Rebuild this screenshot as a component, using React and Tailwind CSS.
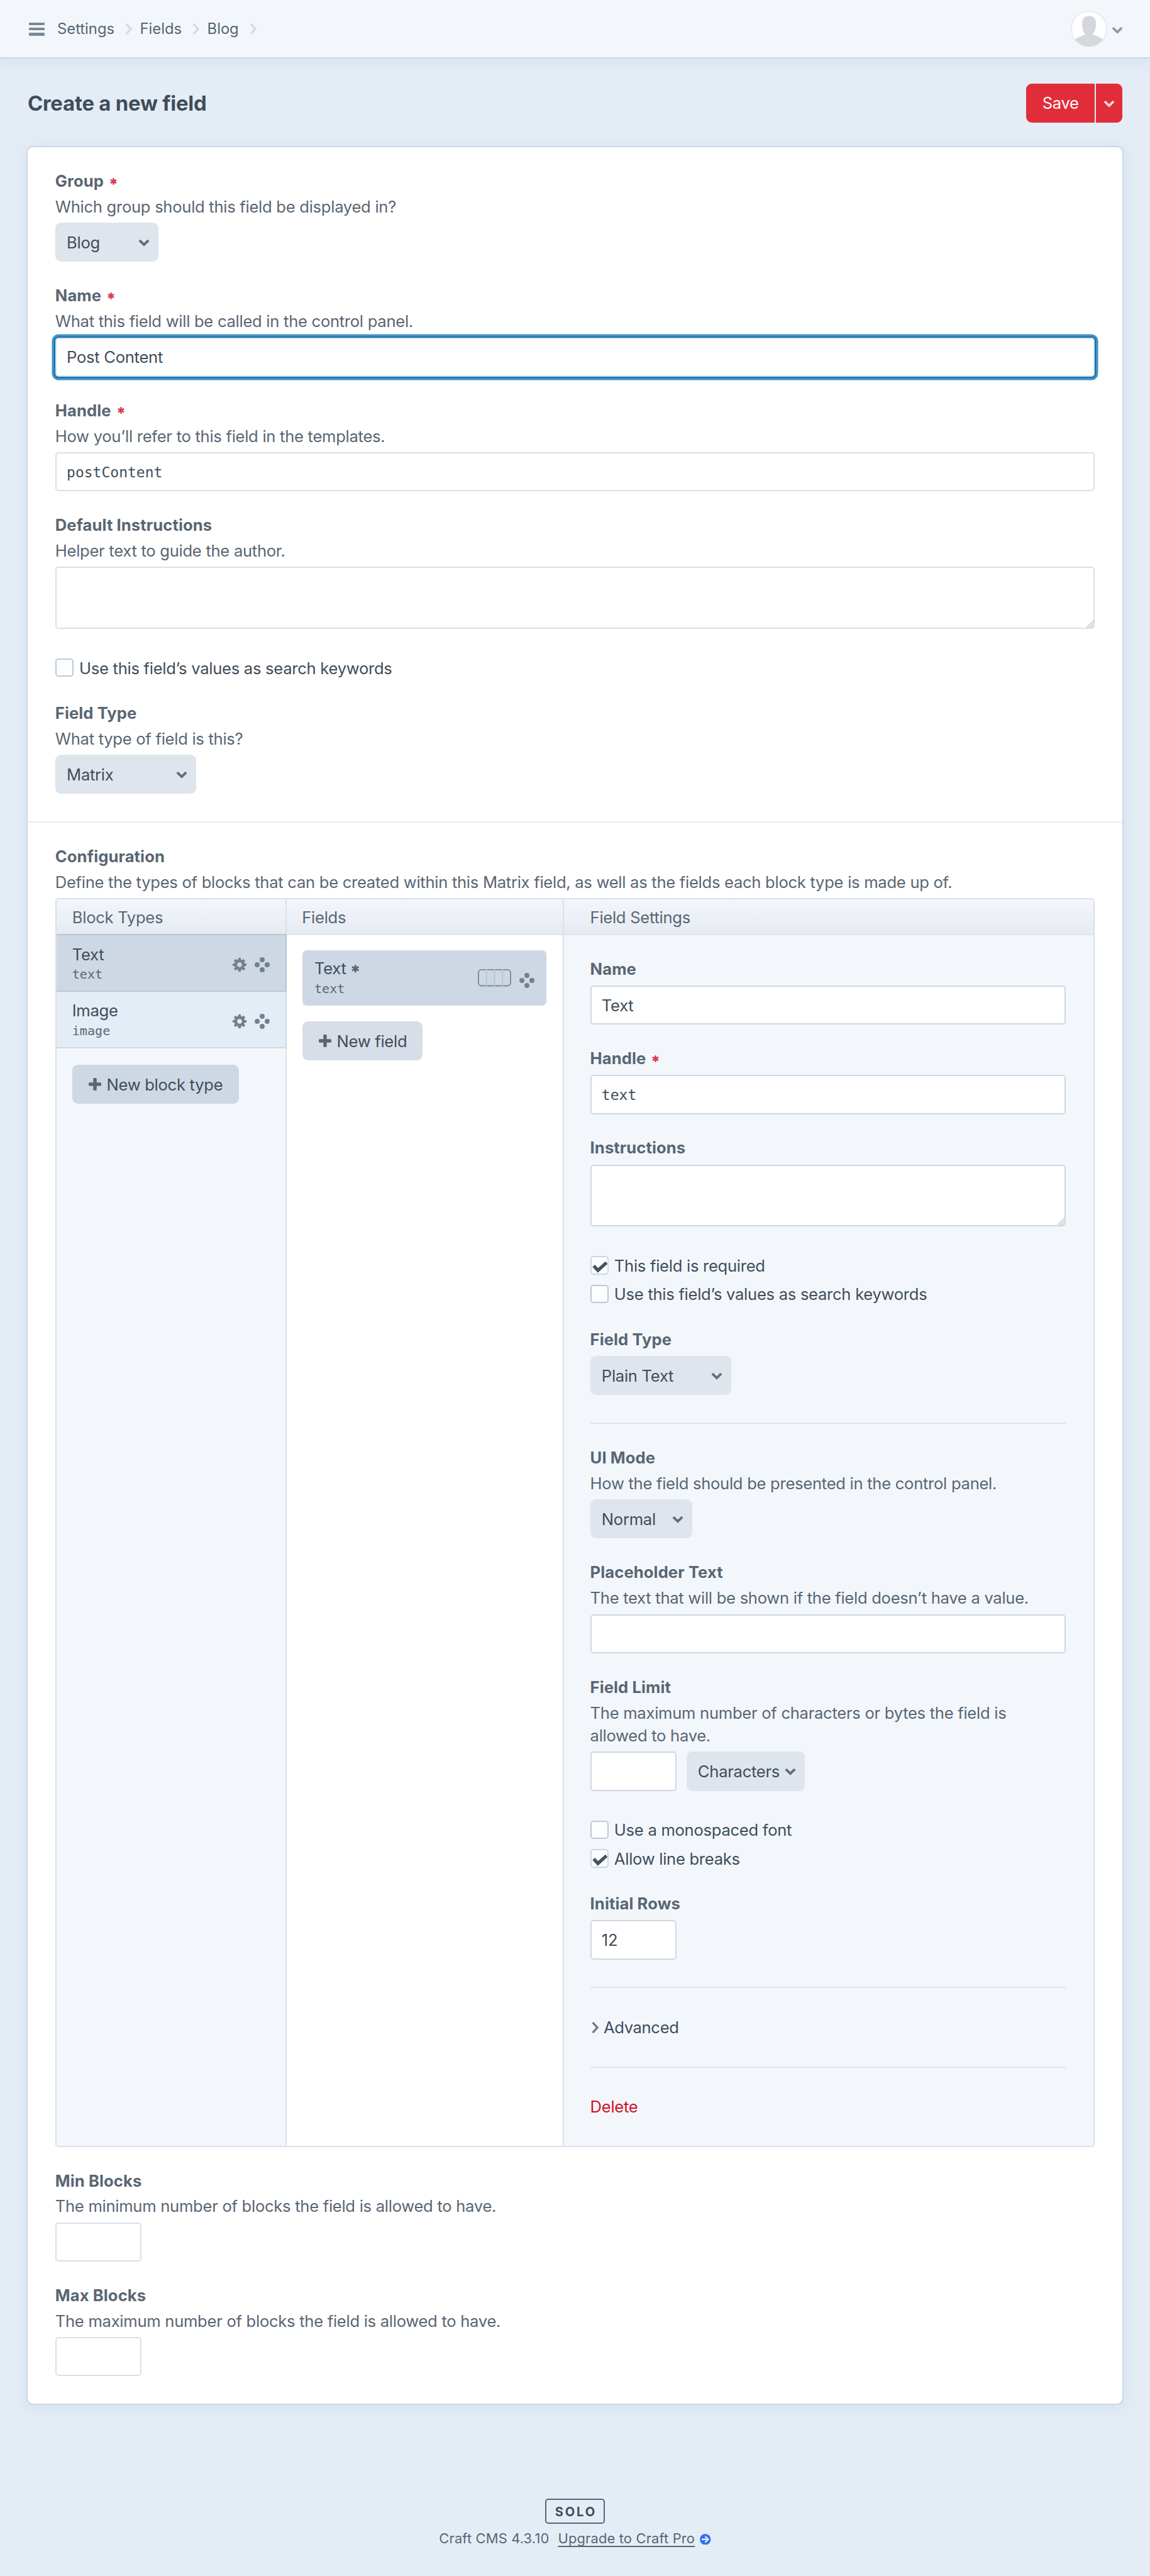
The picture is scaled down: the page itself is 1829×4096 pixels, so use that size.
import React from "react";

function ChevronDown({ className = "" }) {
  return (
    <svg viewBox="0 0 19.5 13" className={`h-[12px] w-[18px] shrink-0 ${className}`} fill="none" stroke="currentColor" strokeWidth="4.2">
      <path d="M2 2.2 9.75 9.9 17.5 2.2" />
    </svg>
  );
}

function ChevronRight({ className = "" }) {
  return (
    <svg viewBox="0 0 12.5 20" className={`h-[18px] w-[11.4px] shrink-0 ${className}`} fill="none" stroke="currentColor" strokeWidth="3.6">
      <path d="M1.8 1 9.9 10 1.8 19" />
    </svg>
  );
}

function Asterisk({ className = "" }) {
  return (
    <svg viewBox="0 0 14 14" className={`shrink-0 ${className}`} fill="none" stroke="currentColor" strokeWidth="3.3">
      <path d="M7 .2v13.6M1.2 3.7l11.6 6.6M1.2 10.3l11.6-6.6" />
    </svg>
  );
}

function Gear() {
  return (
    <svg viewBox="0 0 24 24" className="size-[22px] shrink-0" fill="none" stroke="currentColor">
      <circle cx="12" cy="12" r="6.6" strokeWidth="5.1" />
      <path
        strokeWidth="4.6"
        d="M12 0v5M12 19v5M0 12h5M19 12h5M3.6 3.6l3.5 3.5M16.9 16.9l3.5 3.5M3.6 20.4l3.5-3.5M16.9 7.1l3.5-3.5"
      />
    </svg>
  );
}

function Move() {
  return (
    <svg viewBox="0 0 26 26" className="size-[24px] shrink-0" fill="currentColor">
      <circle cx="13" cy="4.4" r="4.3" />
      <circle cx="13" cy="21.6" r="4.3" />
      <circle cx="4.4" cy="13" r="4.3" />
      <circle cx="21.6" cy="13" r="4.3" />
    </svg>
  );
}

function Plus() {
  return (
    <svg viewBox="0 0 22 22" className="size-[20px] shrink-0" fill="#596673">
      <rect x="8" y="0" width="6" height="22" rx="1.6" />
      <rect x="0" y="8" width="22" height="6" rx="1.6" />
    </svg>
  );
}

function WidthSlider() {
  return (
    <svg viewBox="0 0 58 30" className="h-[27.4px] w-[53px] shrink-0" fill="none" strokeWidth="2">
      <rect x="1" y="1" width="56" height="28" rx="5.5" stroke="#7b8997" />
      <path d="M15 0v30M29 0v30M43 0v30" stroke="#b7c4d1" />
    </svg>
  );
}

function Label({ children, required, tight }) {
  return (
    <div
      className={`-mt-[8px] flex items-center gap-[10px] text-[25.6px] leading-[36.35px] font-bold tracking-[0.004em] text-[#596673] ${
        tight ? "mb-[4.5px]" : "mb-[8px]"
      }`}
    >
      {children}
      {required && <Asterisk className="size-[11px] text-[#da3b4e]" />}
    </div>
  );
}

function Field({ label, required, desc, children }) {
  return (
    <div>
      <Label required={required} tight={!!desc}>
        {label}
      </Label>
      {desc && <p className="mb-[7.2px] text-[#596673]">{desc}</p>}
      {children}
    </div>
  );
}

function Input({ value, mono, focus, className = "", border = "border-[#d9e0e9]" }) {
  return (
    <div
      className={`flex h-[62.17px] items-center rounded-[5px] border-2 bg-white px-[16.3px] pt-[1.5px] text-[#3f4d5a] ${
        focus ? "border-[#d9e0e9] shadow-[0_0_0_2px_#0f73b3,0_0_0_5.5px_#4092c6]" : border
      } ${mono ? "font-['DejaVu_Sans_Mono',monospace] text-[23px] tracking-normal" : ""} ${className}`}
    >
      {value}
    </div>
  );
}

function TextArea({ border = "border-[#d9e0e9]" }) {
  return (
    <div className={`flex h-[98.3px] items-end justify-end rounded-[5px] border-2 bg-white ${border}`}>
      <svg viewBox="0 0 12 12" className="size-[11px]" stroke="#8b8b8b" strokeWidth="1">
        <path d="M0 12 12 0M4 12l8-8M8 12l4-4" />
      </svg>
    </div>
  );
}

function Select({ value, className = "" }) {
  return (
    <div
      className={`flex h-[62.17px] items-center justify-between rounded-[9px] bg-[#dfe5ec] pt-[2px] pr-[14px] pl-[18.3px] text-[#3f4d5a] ${className}`}
    >
      {value}
      <ChevronDown className="text-[#606d7b]" />
    </div>
  );
}

function Checkbox({ checked, children }) {
  return (
    <div className="flex h-[36.35px] items-center text-[#3f4d5a]">
      <span
        className={`mr-[9px] size-[29.3px] shrink-0 rounded-[5px] border-2 bg-[#fbfdff] ${
          checked ? "border-[#cdd8e4]" : "border-[#bcc9d8]"
        }`}
      >
        {checked && (
          <svg viewBox="2 2 28 28" className="size-full" fill="none" stroke="#46525f" strokeWidth="5.8">
            <path d="M5.6 17.2 13 25.3 28.2 11.6" />
          </svg>
        )}
      </span>
      <span className="pt-[2px]">{children}</span>
    </div>
  );
}

function Button({ children, className = "" }) {
  return (
    <div className={`flex h-[62px] items-center gap-[8.5px] rounded-[9px] pl-[25.6px] text-[#3f4d5a] ${className}`}>
      <Plus />
      <span className="pt-[2px]">{children}</span>
    </div>
  );
}

function ColumnHead({ children, className = "" }) {
  return (
    <div
      className={`flex h-[57px] items-center border-b-2 border-[#dfe4ed] bg-linear-to-b from-[#f3f7fc] to-[#e6eaf2] pt-[3px] text-[#596673] ${className}`}
    >
      {children}
    </div>
  );
}

function BlockType({ name, handle, className = "" }) {
  return (
    <div className={`-mr-[2px] flex justify-between border-r-2 border-b-2 pr-[24.5px] pl-[25px] ${className}`}>
      <div className="pt-[12.6px]">
        <div className="text-[#3f4d5a]">{name}</div>
        <div className="-mt-[1px] font-['DejaVu_Sans_Mono',monospace] text-[20.1px] leading-[28px] tracking-normal text-[#596673]">
          {handle}
        </div>
      </div>
      <div className="flex items-center gap-[13.7px] pt-[7px] text-[#73808e]">
        <Gear />
        <Move />
      </div>
    </div>
  );
}

const Rule = () => <div className="h-[2px] bg-[#dfe4ea]" />;

function FieldSettings() {
  const b = "border-[#cdd8e4]";
  return (
    <div className="flex flex-col gap-[43.89px] pt-[43.4px] pr-[43.9px] pb-[43.9px] pl-[42px]">
      <Field label="Name">
        <Input value="Text" border={b} />
      </Field>
      <Field label="Handle" required>
        <Input value="text" mono border={b} />
      </Field>
      <Field label="Instructions">
        <TextArea border={b} />
      </Field>
      <div className="flex flex-col gap-[9.1px]">
        <Checkbox checked>This field is required</Checkbox>
        <Checkbox>Use this field’s values as search keywords</Checkbox>
      </div>
      <Field label="Field Type">
        <Select value="Plain Text" className="w-[224px]" />
      </Field>
      <Rule />
      <Field label="UI Mode" desc="How the field should be presented in the control panel.">
        <Select value="Normal" className="w-[162.7px]" />
      </Field>
      <Field label="Placeholder Text" desc="The text that will be shown if the field doesn’t have a value.">
        <Input border={b} />
      </Field>
      <Field
        label="Field Limit"
        desc={
          <>
            The maximum number of characters or bytes the field is
            <br />
            allowed to have.
          </>
        }
      >
        <div className="flex gap-[15.5px]">
          <Input className="w-[137.5px]" border={b} />
          <Select value="Characters" className="w-[188.3px]" />
        </div>
      </Field>
      <div className="flex flex-col gap-[9.1px]">
        <Checkbox>Use a monospaced font</Checkbox>
        <Checkbox checked>Allow line breaks</Checkbox>
      </div>
      <Field label="Initial Rows">
        <Input value="12" className="w-[137.5px]" border={b} />
      </Field>
      <Rule />
      <div className="flex h-[36.35px] items-center gap-[8px] pl-[2px] tracking-[-0.014em] text-[#3f4d5a]">
        <ChevronRight className="text-[#6b7885]" />
        <span className="pt-[2px]">Advanced</span>
      </div>
      <Rule />
      <div className="-mb-[1px] pt-[1px] text-[#cf1124]">Delete</div>
    </div>
  );
}

export default function App() {
  return (
    <div className="min-h-[4096px] w-[1829px] bg-[#e4edf6] font-[Inter,sans-serif] text-[25.6px] leading-[36.35px] tracking-[-0.011em]">
      <header className="flex h-[93.3px] items-center justify-between border-b-2 border-[#cdd8e4] bg-[#f3f7fc] pr-[43.5px] pl-[45.7px] shadow-[0_4px_22px_rgba(195,212,225,0.55)]">
        <div className="flex items-center pt-[1px] text-[23.8px] tracking-[-0.001em] text-[#596673]">
          <div className="mr-[19.8px] flex w-[25.6px] flex-col gap-[4.1px]">
            <span className="h-[4.3px] rounded-[1px] bg-[#7c8896]" />
            <span className="h-[4.3px] rounded-[1px] bg-[#7c8896]" />
            <span className="h-[4.3px] rounded-[1px] bg-[#7c8896]" />
          </div>
          {["Settings", "Fields", "Blog"].map((c) => (
            <React.Fragment key={c}>
              <span className="pt-[1px]">{c}</span>
              <ChevronRight className="mr-[12.2px] ml-[17px] text-[#d2dbe1]" />
            </React.Fragment>
          ))}
        </div>
        <div className="flex items-center gap-[6.5px]">
          <svg viewBox="0 0 190 190" className="size-[58px]">
            <circle cx="95" cy="95" r="92" fill="#fff" stroke="#e7ebf0" strokeWidth="6" />
            <g fill="#d4d8dd">
              <path d="M59 64C59 38 73 28 95 28s36 10 36 36c0 28-3 42-19 63H78C62 106 59 92 59 64Z" />
              <path d="M78 125c-20 2-40 13-56 25a91 91 0 0 0 146 0c-16-12-36-23-56-25Z" />
            </g>
          </svg>
          <ChevronDown className="mt-[5px] text-[#919daa]" />
        </div>
      </header>

      <div className="flex h-[140.7px] items-center justify-between px-[43.9px]">
        <h1 className="pt-[1.5px] text-[32.9px] font-bold tracking-[-0.007em] text-[#3f4d5a]">Create a new field</h1>
        <div className="flex h-[62px] gap-[2px] text-white">
          <div className="flex w-[108.8px] items-center justify-center rounded-l-[9px] bg-[#e12d39] pt-[1.5px]">Save</div>
          <div className="flex w-[42px] items-center justify-center rounded-r-[9px] bg-[#e12d39]">
            <ChevronDown className="mt-[3px] text-[#f9d0d4]" />
          </div>
        </div>
      </div>

      <main className="mx-[43.9px] rounded-[9px] bg-white shadow-[0_0_0_2px_#cdd8e4,0_4px_22px_2px_rgba(195,212,225,0.55)]">
        <div className="flex flex-col gap-[43.89px] p-[43.89px]">
          <Field label="Group" required desc="Which group should this field be displayed in?">
            <Select value="Blog" className="w-[164.6px]" />
          </Field>
          <Field label="Name" required desc="What this field will be called in the control panel.">
            <Input value="Post Content" focus />
          </Field>
          <Field label="Handle" required desc="How you’ll refer to this field in the templates.">
            <Input value="postContent" mono />
          </Field>
          <Field label="Default Instructions" desc="Helper text to guide the author.">
            <TextArea />
          </Field>
          <Checkbox>Use this field’s values as search keywords</Checkbox>
          <Field label="Field Type" desc="What type of field is this?">
            <Select value="Matrix" className="w-[224px]" />
          </Field>
        </div>
        <div className="h-[1.8px] bg-[#e9ecf0]" />
        <div className="flex flex-col gap-[43.89px] p-[43.89px]">
          <Field
            label="Configuration"
            desc="Define the types of blocks that can be created within this Matrix field, as well as the fields each block type is made up of."
          >
            <div className="flex overflow-hidden rounded-[5px] border-2 border-[#d9e0e9]">
              <div className="w-[366px] border-r-2 border-[#dbe1e8] bg-[#f3f7fc]">
                <ColumnHead className="pl-[25px]">Block Types</ColumnHead>
                <BlockType name="Text" handle="text" className="relative -mt-[2px] h-[91.4px] border-t-2 border-[#bac6d2] bg-[#cdd8e4]" />
                <BlockType name="Image" handle="image" className="h-[90.2px] border-[#cdd8e4] bg-[#e4edf6]" />
                <Button className="mt-[25.8px] ml-[25.6px] w-[264.5px] bg-[#cdd8e4]">New block type</Button>
              </div>
              <div className="w-[440.8px] border-r-2 border-[#dbe1e8] bg-white">
                <ColumnHead className="pl-[24.5px]">Fields</ColumnHead>
                <div className="mx-[25.6px] mt-[23.8px] flex h-[87.8px] justify-between rounded-[7px] bg-[#cdd8e4] pr-[18.5px] pl-[18.6px]">
                  <div className="pt-[11.4px]">
                    <div className="flex items-center gap-[8.5px] text-[#3f4d5a]">
                      Text
                      <Asterisk className="size-[12.5px] text-[#596673]" />
                    </div>
                    <div className="-mt-[1px] font-['DejaVu_Sans_Mono',monospace] text-[20.1px] leading-[28px] tracking-normal text-[#596673]">
                      text
                    </div>
                  </div>
                  <div className="flex items-center gap-[13.7px] text-[#73808e]">
                    <WidthSlider />
                    <div className="pt-[8px]">
                      <Move />
                    </div>
                  </div>
                </div>
                <Button className="mt-[25.6px] ml-[25.6px] w-[191px] bg-[#d7dee8]">New field</Button>
              </div>
              <div className="flex-1 bg-[#f3f7fc]">
                <ColumnHead className="pl-[42px]">Field Settings</ColumnHead>
                <FieldSettings />
              </div>
            </div>
          </Field>
          <Field label="Min Blocks" desc="The minimum number of blocks the field is allowed to have.">
            <Input className="w-[137.5px]" />
          </Field>
          <Field label="Max Blocks" desc="The maximum number of blocks the field is allowed to have.">
            <Input className="w-[137.5px]" />
          </Field>
        </div>
      </main>

      <footer className="flex flex-col items-center pt-[151px]">
        <div className="flex h-[40px] w-[94.5px] items-center justify-center rounded-[5px] border-2 border-[#596673] pt-[1px] pl-[2.8px] text-[20.1px] font-bold tracking-[0.142em] text-[#3f4d5a]">
          SOLO
        </div>
        <div className="mt-[8px] flex items-center text-[21.95px] leading-[30px] tracking-[0.0065em] text-[#596673]">
          <span className="mr-[14px]">Craft CMS 4.3.10</span>
          <span className="underline decoration-[2px] underline-offset-[4px]">Upgrade to Craft Pro</span>
          <svg viewBox="0 0 20 20" className="mt-[2px] ml-[8px] size-[17.5px]">
            <circle cx="10" cy="10" r="10" fill="#3270ee" />
            <path d="M3.4 10h12M9.8 4.4l5.6 5.6-5.6 5.6" fill="none" stroke="#e4edf6" strokeWidth="2.6" />
          </svg>
        </div>
      </footer>
    </div>
  );
}
